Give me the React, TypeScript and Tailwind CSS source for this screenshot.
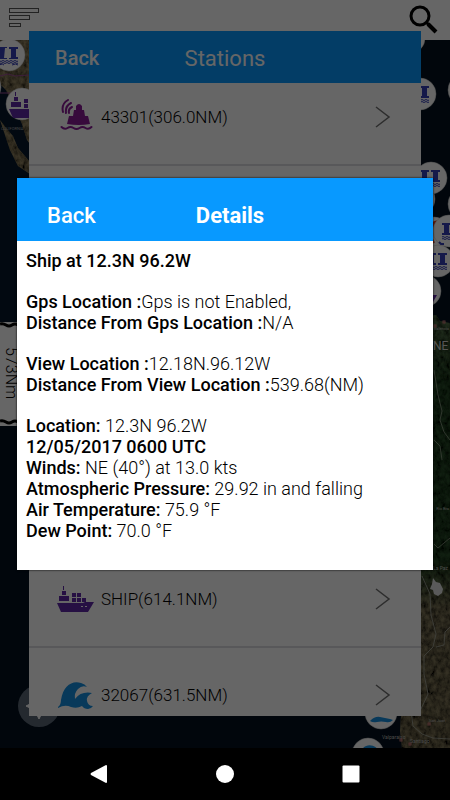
import type { ReactNode } from 'react';

const stationsTop = [{ name: '43301(306.0NM)', kind: 'buoy' }];

const stationsBottom = [
    { name: 'SHIP(614.1NM)', kind: 'ship' },
    { name: '32067(631.5NM)', kind: 'wave' },
];

// each group is followed by an empty line in the details panel
const details = [
    [{ label: 'Ship at 12.3N 96.2W', value: '' }],
    [
        { label: 'Gps Location :', value: 'Gps is not Enabled,' },
        { label: 'Distance From Gps Location :', value: 'N/A' },
    ],
    [
        { label: 'View Location :', value: '12.18N.96.12W' },
        { label: 'Distance From View Location :', value: '539.68(NM)' },
    ],
    [
        { label: 'Location:', value: ' 12.3N 96.2W' },
        { label: '12/05/2017 0600 UTC', value: '' },
        { label: 'Winds:', value: ' NE (40°) at 13.0 kts' },
        { label: 'Atmospheric Pressure:', value: ' 29.92 in and falling' },
        { label: 'Air Temperature:', value: ' 75.9 °F' },
        { label: 'Dew Point:', value: ' 70.0 °F' },
    ],
];

const BuoyShape = () => (
    <g fill="#8a1a96">
        <path d="M11 25l2-8h4l1-6h2V7q3-4 6 0v4h2l1 6h3l2 8q-11 2-23 0z" />
        <g fill="none" stroke="#8a1a96" strokeWidth="2" strokeLinecap="round">
            <path d="M16 8q-4 2-3 6M15 4q-6 3-5 10M12 1Q5 5 7 13" />
            <path d="M5.500 28q3 3 6 1t6 0 6 0 6 0 6-1" />
        </g>
    </g>
);

const ShipShape = () => (
    <g fill="#602aa8">
        <path d="M0 17h26l2-1h9l-6 10H4z" />
        <path d="M2 10h10v5H2zM5 5h4v4H5zM6 0h1v4H6z" />
        <path d="M15 7h4v4h-4zM20 7h4v4h-4zM15 12h4v4h-4zM20 12h4v4h-4zM25 12h4v4h-4z" />
        <path d="M24 20h2v1h-2zM28 20h2v1h-2z" fill="#ffffff" />
    </g>
);

const WaveShape = () => (
    <path
        d="M1 25Q4 23 4 18C6 4 15-2 24 1Q28 2 30 5Q25 3 21 7Q17 11 18 17Q24 9 35 11Q29 14 30 19Q31 24 36 24Q34 27 31 27Q27 27 25 24Q20 27 14 25Q8 22 1 26z"
        fill="#158fe0"
    />
);

const PlatformShape = () => (
    <g fill="#353fb8">
        <path d="M-11-8h9v2h-2v8h2v2h-9v-2h2v-8h-2zM0-8h9v2H7v8h2v2H0v-2h2v-8H0z" />
        <path
            d="M-11 6q1-1 2 0t2 0 2 0 2 0 2 0 2 0 2 0 2 0 2 0 2 0M-11 8q1-1 2 0t2 0 2 0 2 0 2 0 2 0 2 0 2 0 2 0 2 0"
            fill="none"
            stroke="#353fb8"
        />
    </g>
);

const StationIcon = ({ kind }: { kind: string }) => (
    <svg width="38" height="36" viewBox="0 0 38 36" aria-hidden="true" className="shrink-0">
        {kind === 'buoy' && <BuoyShape />}
        {kind === 'ship' && <g transform="translate(1 5)"><ShipShape /></g>}
        {kind === 'wave' && <g transform="translate(1 5)"><WaveShape /></g>}
    </svg>
);

const Marker = ({ x, y, children }: { x: number; y: number; children?: ReactNode }) => (
    <g transform={`translate(${x} ${y})`}>
        <circle r="16" fill="#ffffff" stroke="#c4c4c4" strokeWidth="0.5" />
        {children}
    </g>
);

const MapView = () => (
    <svg
        viewBox="0 0 450 708"
        preserveAspectRatio="xMidYMid slice"
        className="absolute inset-0 h-full w-full"
        fontFamily="Roboto, sans-serif"
        aria-hidden="true"
    >
        <defs>
            <filter id="terrain" x="0" y="0" width="100%" height="100%">
                <feTurbulence type="fractalNoise" baseFrequency="0.22 0.16" numOctaves="4" seed="7" result="noise" />
                <feColorMatrix in="noise" type="matrix" values="0 0 0 0 0  0 0 0 0 0  0 0 0 0 0  1.6 0 0 0 -0.35" result="shade" />
                <feComposite in="shade" in2="SourceGraphic" operator="in" result="shade" />
                <feMerge>
                    <feMergeNode in="SourceGraphic" />
                    <feMergeNode in="shade" />
                </feMerge>
            </filter>
            <linearGradient id="andes" x1="0" y1="0" x2="0" y2="1">
                <stop offset="0" stopColor="#55704a" />
                <stop offset="0.15" stopColor="#2c4d2a" />
                <stop offset="0.57" stopColor="#2c4d2a" />
                <stop offset="0.68" stopColor="#847a5c" />
                <stop offset="1" stopColor="#7f7556" />
            </linearGradient>
        </defs>
        <rect width="450" height="708" fill="#03101f" />
        <rect y="40" width="60" height="250" fill="#05182b" />

        {/* baja california */}
        <path d="M0 0h40v118L27 100 22 84 14 66 6 50 0 44z" fill="#9a8a66" filter="url(#terrain)" />
        <path d="M0 80l6 8 7 8 5 12 12 14v12l-12-8-8-16z" fill="#9a8a66" filter="url(#terrain)" />
        <path d="M0 36l8-2 7 2 14-1M0 53h20" stroke="#9c4d94" fill="none" />
        <text x="1" y="90" fill="#a8a8a8" fontSize="4">CALIFORNIA</text>

        {/* south america */}
        <path d="M428 276l8-1 4 6 10 2v425h-48l-2-17 1-15V530h18V360z" fill="url(#andes)" filter="url(#terrain)" />
        <path d="M434 330l4 25 4 16-2 9 4 12 6 8M434 400l6 6 2 14M434 504l4 4 12-10" stroke="#8f9a86" strokeWidth="0.8" fill="none" />
        <path d="M422 536l8 18 1 21 5 19-3 13-9 9v18l4 20-8 17M436 607l8-2 1-13 5-5M410 664l3 22 9 8 11 4 17 1" stroke="#a3a69a" strokeWidth="0.8" fill="none" />
        <path d="M432 544l1-6 3 4 4 1 3 6-1 4-4 3-4-2-1-4-3-1z" fill="#e2e2e2" />
        <g fill="#b9bab5" fontSize="5">
            <text x="449" y="290" textAnchor="end" fontSize="4">Valencia</text>
            <text x="449" y="470" textAnchor="end" fontSize="4">Rio Bra</text>
            <text x="448" y="530" textAnchor="end">La Paz</text>
            <text x="382" y="699">Valparaiso</text>
            <text x="410" y="703">Santiago</text>
            <text x="429" y="682" fontSize="4">San Juan</text>
        </g>
        <text x="433" y="310" fill="#d6d6d6" fontSize="12">NE</text>
        <g fill="none" stroke="#c97878" strokeWidth="1">
            <rect x="443" y="281" width="2" height="2" />
            <rect x="434" y="285" width="2" height="2" />
            <rect x="400" y="699" width="2" height="2" />
            <rect x="409" y="703" width="2" height="2" />
            <rect x="428" y="683" width="2" height="2" />
        </g>

        <Marker x={-15} y={47} />
        <Marker x={9} y={15}>
            <PlatformShape />
            <path d="M-4-7h4v3l2 7h-7z" fill="#ffffff" />
            <path d="M-10 10q4-2 5 0M3 10q4-2 6 0" stroke="#353fb8" fill="none" />
        </Marker>
        <Marker x={22} y={64}>
            <g transform="translate(-13 -12)"><ShipShape /></g>
        </Marker>
        <Marker x={409} y={-2} />
        <Marker x={420} y={54}><PlatformShape /></Marker>
        <Marker x={464} y={50} />
        <Marker x={419} y={159} />
        <Marker x={431} y={138}><PlatformShape /></Marker>
        <Marker x={464} y={164} />
        <Marker x={434} y={193}>
            <path d="M-2-10l3-1-3 6zM-2 6l2 4z" fill="#e0492a" stroke="#e0492a" strokeWidth="2" />
        </Marker>
        <Marker x={449} y={191}>
            <g transform="translate(4 0)"><PlatformShape /></g>
            <path d="M-10 11l2 2h3" stroke="#353fb8" strokeWidth="2" fill="none" />
        </Marker>
        <Marker x={438} y={221}><PlatformShape /></Marker>
        <Marker x={425} y={251}>
            <path d="M4 4h8l-4 7H4z" fill="#602aa8" />
        </Marker>
        <Marker x={381} y={673}>
            <path d="M-11 8q5-5 10-4t10 2l3 1q-3 3-7 2-5-1-9 0t-7-1z" fill="#158fe0" />
        </Marker>
        <Marker x={368} y={714}>
            <g transform="translate(-12 -9) scale(0.7)"><WaveShape /></g>
        </Marker>
    </svg>
);

const ScaleRuler = () => (
    <div className="absolute left-0 top-[282px] flex h-[104px] w-9 flex-col justify-between bg-white">
        <svg viewBox="0 0 36 6" className="h-[6px] w-9" aria-hidden="true">
            <path d="M0 2q3-1 6 1t6 0 6 0 6 0 6 0 6 0" stroke="#000000" strokeWidth="3" fill="none" />
        </svg>
        <span className="self-start pl-px text-base leading-5 font-light text-black [writing-mode:vertical-rl]">
            573Nm
        </span>
        <svg viewBox="0 0 36 8" className="h-2 w-9" aria-hidden="true">
            <path d="M0 3q3-1 6 1t6 0 6 0 6 0 6 0 6 0" stroke="#000000" strokeWidth="3" fill="none" />
        </svg>
    </div>
);

const StationRow = ({ name, kind }: { name: string; kind: string }) => (
    <li className="h-24 border-b-2 border-[#dcdce0]">
        <button type="button" className="flex h-full w-full items-center gap-[7px] pl-[27px] pr-[30px] text-left">
            <StationIcon kind={kind} />
            <span className="flex-1 pt-0.5 text-[17px] font-light text-black">{name}</span>
            <svg width="16" height="24" viewBox="0 0 16 24" fill="none" stroke="#707070" strokeWidth="1.5" aria-hidden="true">
                <path d="M1 2l13 10L1 22" />
            </svg>
        </button>
    </li>
);

const StationsPanel = () => (
    <section className="absolute inset-0 flex px-[29px] pb-8 pt-[31px]">
        <div className="flex flex-1 flex-col overflow-hidden bg-white">
            <header className="z-10 grid h-[52px] shrink-0 grid-cols-[1fr_auto_1fr] items-center bg-[#0899ff] px-[26px] pt-0.5 text-white">
                <button type="button" className="justify-self-start text-[20px] font-medium">Back</button>
                <h2 className="text-[22px]">Stations</h2>
            </header>
            {/* list is scrolled a little, so the first and last rows are cut */}
            <div className="-mt-[13px] -mb-7 flex flex-1 flex-col justify-between">
                <ul>
                    {stationsTop.map((station) => (
                        <StationRow key={station.name} {...station} />
                    ))}
                </ul>
                <ul>
                    {stationsBottom.map((station) => (
                        <StationRow key={station.name} {...station} />
                    ))}
                </ul>
            </div>
        </div>
    </section>
);

const DetailsDialog = () => (
    <div className="absolute inset-0 z-20 flex items-center bg-black/60 px-[17px]">
        <div role="dialog" aria-labelledby="details-title" className="flex-1 bg-white shadow-[0_0_2px_#000000]">
            <header className="grid h-[63px] grid-cols-[1fr_auto_1fr] items-center bg-[#0899ff] pl-[30px] pr-5 pt-3 text-white">
                <button type="button" className="justify-self-start text-[22px] font-medium">Back</button>
                <h1 id="details-title" className="text-[22px] font-bold">Details</h1>
            </header>
            <div className="flex flex-col gap-5 px-[9px] pb-[29px] pt-[9px] text-[18px] leading-[21px] text-black">
                {details.map((group, index) => (
                    <div key={index}>
                        {group.map((item) => (
                            <p key={item.label} className="font-light">
                                <b className="font-medium">{item.label}</b>
                                {item.value}
                            </p>
                        ))}
                    </div>
                ))}
            </div>
        </div>
    </div>
);

const App = () => {
    return (
        <div className="flex min-h-screen flex-col bg-black font-[Roboto,sans-serif]">
            <main className="relative flex flex-1 flex-col overflow-hidden">
                <header className="flex h-10 items-start justify-between bg-white pl-[9px] pr-3 pt-1">
                    <button type="button" aria-label="Menu" className="pt-1">
                        <svg width="30" height="20" viewBox="0 0 30 20" fill="none" stroke="#555555" aria-hidden="true">
                            <rect x="0.5" y="0.5" width="29" height="4" />
                            <rect x="0.5" y="7.5" width="20" height="4" />
                            <rect x="0.5" y="15.5" width="11" height="3" />
                        </svg>
                    </button>
                    <button type="button" aria-label="Search">
                        <svg width="30" height="30" viewBox="0 0 30 30" fill="none" stroke="#000000" aria-hidden="true">
                            <circle cx="12" cy="12" r="9" strokeWidth="3" />
                            <path d="M18 18l3 3" strokeWidth="3" />
                            <path d="M20 20l8 8" strokeWidth="4" />
                        </svg>
                    </button>
                </header>
                <div className="relative flex-1">
                    <MapView />
                    <ScaleRuler />
                    <button
                        type="button"
                        aria-label="My location"
                        className="absolute bottom-[21px] left-[18px] flex h-[42px] w-[42px] items-center justify-center rounded-full bg-[#5b6777]"
                    >
                        <svg width="30" height="30" viewBox="0 0 30 30" fill="#ffffff" stroke="#ffffff" aria-hidden="true">
                            <circle cx="15" cy="15" r="5" fill="none" strokeWidth="2" />
                            <path d="M15 2l2 4h-4zM15 28l2-4h-4zM2 15l4-2v4zM28 15l-4-2v4z" />
                        </svg>
                    </button>
                </div>
                <StationsPanel />
                <DetailsDialog />
            </main>

            <nav className="flex h-[52px] items-center justify-around bg-black px-9">
                <button type="button" aria-label="Back">
                    <svg width="18" height="18" viewBox="0 0 18 18" fill="#ffffff" aria-hidden="true">
                        <path d="M16 0q1 0 1 1v16q0 1-1 1L1 10q-1-1 0-2z" />
                    </svg>
                </button>
                <button type="button" aria-label="Home">
                    <svg width="18" height="18" viewBox="0 0 18 18" fill="#ffffff" aria-hidden="true">
                        <circle cx="9" cy="9" r="9" />
                    </svg>
                </button>
                <button type="button" aria-label="Recent apps">
                    <svg width="18" height="18" viewBox="0 0 18 18" fill="#ffffff" aria-hidden="true">
                        <rect x="0.5" y="0.5" width="17" height="17" rx="1" />
                    </svg>
                </button>
            </nav>
        </div>
    );
};

export default App;
